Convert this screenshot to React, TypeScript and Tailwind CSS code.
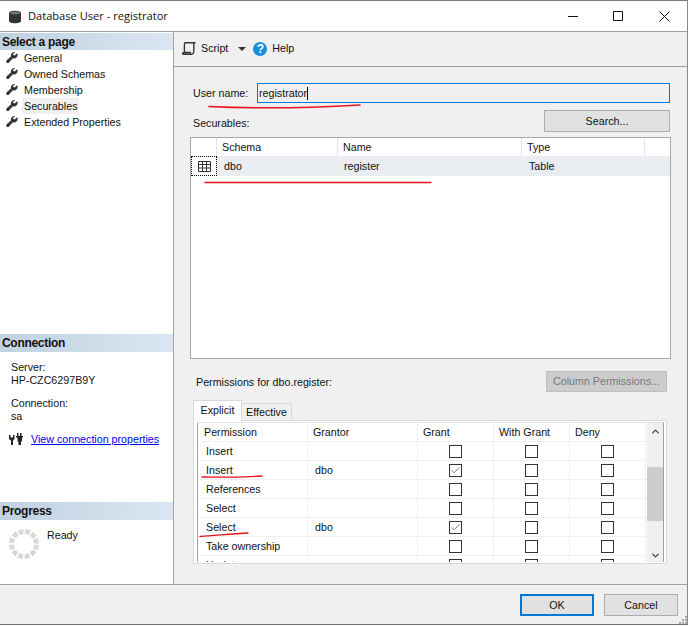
import { Check, ChevronDown, ChevronUp } from 'lucide-react';

const pages = ['General', 'Owned Schemas', 'Membership', 'Securables', 'Extended Properties'];

const permissions = [
    { name: 'Insert', grantor: '', grant: false },
    { name: 'Insert', grantor: 'dbo', grant: true },
    { name: 'References', grantor: '', grant: false },
    { name: 'Select', grantor: '', grant: false },
    { name: 'Select', grantor: 'dbo', grant: true },
    { name: 'Take ownership', grantor: '', grant: false },
    { name: 'Update', grantor: '', grant: false },
];

function WrenchIcon() {
    return (
        <svg width="12" height="12" viewBox="0 0 14 14" className="shrink-0">
            <path d="M13 1.500 10 4.200 8.600 3.600 8.200 2 11 0.200C8.800-0.300 6.400 0.800 5.900 3c-0.200 0.800-0.100 1.500 0.100 2.100L0.900 9.600C0 10.400 0 11.600 0.800 12.400 1.600 13.200 2.800 13.100 3.500 12.300L8 7.400c2.600 0.800 5.300-0.900 5.600-3.500 0.100-0.900-0.100-1.700-0.600-2.400Z" fill="#333" />
        </svg>
    );
}

function SectionHeader({ title, first }: { title: string; first?: boolean }) {
    return (
        <div className={`flex items-center bg-gradient-to-r from-[#c0d1e0] to-[#dbe6f3] pl-[2px] text-[12px] font-bold tracking-[-0.3px] text-[#111] ${first ? 'h-[17px]' : 'h-[18px]'}`}>
            {title}
        </div>
    );
}

function CheckBox({ checked }: { checked: boolean }) {
    return (
        <div className="flex h-[13px] w-[13px] items-center justify-center border border-[#333] bg-white">
            {checked && <Check className="h-[11px] w-[11px] text-[#555]" strokeWidth={1.7} />}
        </div>
    );
}

export default function App() {
    return (
        <div className="relative h-[627px] w-[689px] overflow-hidden bg-white font-['Liberation_Sans',sans-serif] text-[10.7px] text-[#111]">
            <div className="flex h-[625px] w-[688px] flex-col border-t border-r border-b border-t-[#7a7a7a] border-r-[#8a8a8a] border-b-[#6e6e6e]">
                {/* Title bar */}
                <div className="flex h-[31px] shrink-0 items-center border-b border-[#a0a0a0] bg-white">
                    <svg width="14" height="14" viewBox="0 0 14 14" className="ml-[8px] mt-px">
                        <path d="M1 3c0-3 12-3 12 0v8c0 3-12 3-12 0Z" fill="#333" />
                        <ellipse cx="7" cy="3" rx="5" ry="1.400" fill="#777" />
                    </svg>
                    <span className="ml-[6px] mt-px font-['Open_Sans',sans-serif] text-[11.1px] text-[#111]">Database User - registrator</span>
                    <div className="ml-auto flex items-center" >
                        <svg width="10" height="10" viewBox="0 0 10 10" stroke="#111" fill="none" className="mr-[35px]">
                            <path d="M0 5.500H10" />
                        </svg>
                        <svg width="10" height="10" viewBox="0 0 10 10" stroke="#111" fill="none" className="mr-[36px]">
                            <path d="M.5.500h9v9h-9Z" />
                        </svg>
                        <svg width="11" height="11" viewBox="0 0 11 11" stroke="#111" fill="none" className="mr-[17px]">
                            <path d="M.5.500l10 10M10.500.500l-10 10" />
                        </svg>
                    </div>
                </div>

                <div className="flex min-h-0 flex-1">
                    {/* Left pane */}
                    <div className="flex w-[174px] shrink-0 flex-col border-r border-[#a0a0a0] bg-white pt-px">
                        <SectionHeader title="Select a page" first />
                        <div className="flex h-[284px] flex-col">
                            {pages.map((page) => (
                                <div key={page} className="flex h-4 items-center pl-[6px]">
                                    <WrenchIcon />
                                    <span className={`ml-[4px] px-[2px] leading-4 ${page === 'Securables' ? 'bg-[#f0f0f0]' : ''}`}>{page}</span>
                                </div>
                            ))}
                        </div>
                        <SectionHeader title="Connection" />
                        <div className="flex h-[150px] flex-col pl-[11px] pt-[9px] leading-[13px]">
                            <div>Server:</div>
                            <div>HP-CZC6297B9Y</div>
                            <div className="mt-[10px]">Connection:</div>
                            <div>sa</div>
                            <div className="mt-[10px] -ml-[2px] flex items-center">
                                <svg width="15" height="13" viewBox="0 0 15 13" fill="#222">
                                    <path d="M0 2h1.500v2.500H4V2h1.500v4L4 7.500V12H2V7.500L0 6Z" />
                                    <path d="M8 0h1.500v3H11V0h1.500v3H14v1.500H13v4h-1V12H9.500V8.500h-1v-4H7V3h1Z" />
                                </svg>
                                <span className="ml-[7px] text-[#0000ee] underline">View connection properties</span>
                            </div>
                        </div>
                        <SectionHeader title="Progress" />
                        <div className="flex flex-1 pl-[9px] pt-[9px]">
                            <svg width="30" height="30" viewBox="0 0 30 30">
                                <circle cx="15" cy="15" r="12.500" fill="none" stroke="#d9d9d9" strokeWidth="5" strokeDasharray="4.940 1.600" strokeDashoffset="-0.800" />
                            </svg>
                            <span className="ml-[8px] mt-[-2px]">Ready</span>
                        </div>
                    </div>

                    {/* Right pane */}
                    <div className="flex min-w-0 flex-1 flex-col bg-[#f0f0f0]">
                        <div className="flex h-[35px] shrink-0 items-center border-b border-[#a0a0a0] pb-px pl-[8px]">
                            <svg width="14" height="13" viewBox="0 0 14 13" fill="none" stroke="#333" strokeWidth="1.400">
                                <path d="M3 .7h10.500M3 .7C2.400 1 2.400 2 2.400 3v7M13 .7c-1 0-1.200 1-1.200 2v7M.5 12.200h9.500c1 0 1.500-1 1.800-2.300M.5 12.200c0-1 .5-1.700 1.500-1.700h7" />
                            </svg>
                            <span className="ml-[5px]">Script</span>
                            <div className="ml-[10px] h-0 w-0 border-x-[4px] border-t-[4px] border-x-transparent border-t-[#333]" />
                            <div className="ml-[7px] flex h-[14px] w-[14px] items-center justify-center rounded-full bg-[#1a8ddc] text-[12px] font-bold text-white">?</div>
                            <span className="ml-[5px]">Help</span>
                        </div>

                        <div className="flex flex-1 flex-col px-4 pt-[16px]">
                            <div className="flex items-center pl-[3px]">
                                <span className="w-[64px]">User name:</span>
                                <div className="flex h-[20px] w-[413px] items-center border border-[#0078d7] bg-[#f0f0f0] pl-[1px]">
                                    registrator<span className="h-[13px] w-px bg-black" />
                                </div>
                            </div>

                            <div className="mt-[7px] flex h-[22px] items-center justify-between pl-[3px] pr-px">
                                <span className="mt-[4px]">Securables:</span>
                                <button className="h-[22px] w-[126px] border border-[#adadad] bg-[#e1e1e1]">Search...</button>
                            </div>

                            <div className="mt-[5px] h-[222px] w-[481px] border border-[#a9a9a9] bg-white">
                                <div className="flex h-[18px] items-center">
                                    <div className="h-full w-[26px] border-r border-[#e4e4e4]" />
                                    <div className="flex h-full w-[121px] items-center border-r border-[#e4e4e4] pl-[5px] pt-px">Schema</div>
                                    <div className="flex h-full w-[184px] items-center border-r border-[#e4e4e4] pl-[5px] pt-px">Name</div>
                                    <div className="flex h-full w-[123px] items-center border-r border-[#e4e4e4] pl-[5px] pt-px">Type</div>
                                </div>
                                <div className="flex h-[20px] items-center bg-[#e9edf1]">
                                    <div className="flex h-full w-[26px] items-center justify-center border border-dotted border-black bg-white">
                                        <svg width="13" height="11" viewBox="0 0 13 11" fill="none" stroke="#333" strokeWidth="1">
                                            <path d="M.5.500h12v10H.5ZM.5 3.500h12M.5 7h12M4.500 .5v10M8.500 .5v10" />
                                        </svg>
                                    </div>
                                    <div className="w-[121px] pl-[7px]">dbo</div>
                                    <div className="w-[184px] pl-[6px]">register</div>
                                    <div className="w-[123px] pl-[7px]">Table</div>
                                </div>
                            </div>

                            <div className="mt-[12px] flex h-[21px] items-center justify-between pl-[6px] pr-[4px]">
                                <span className="mt-[1px]">Permissions for dbo.register:</span>
                                <button className="h-[21px] w-[121px] border border-[#bfbfbf] bg-[#cccccc] text-[#787878]">Column Permissions...</button>
                            </div>

                            <div className="ml-[3px] mt-[8px] flex h-[21px] items-end">
                                <div className="relative z-10 flex h-[21px] w-[49px] items-center justify-center border border-b-0 border-[#d9d9d9] bg-white pb-[2px]">Explicit</div>
                                <div className="flex h-[18px] w-[50px] items-center justify-center border border-b-0 border-l-0 border-[#d9d9d9] bg-[#f0f0f0]">Effective</div>
                            </div>

                            <div className="-mt-px ml-[3px] h-[144px] w-[474px] border border-[#d9d9d9] bg-white pl-[3px] pt-[1px]">
                                <div className="flex h-[140px] w-[467px] overflow-hidden border-x border-t border-x-[#a0a0a0] border-t-[#e4e4e4]">
                                    <div className="min-w-0 flex-1">
                                        <div className="grid h-[19px] grid-cols-[110px_110px_76px_76px_76px] items-center border-b border-[#f0f0f0]">
                                            <div className="flex h-full items-center border-r border-[#f0f0f0] pl-[6px]">Permission</div>
                                            <div className="flex h-full items-center border-r border-[#f0f0f0] pl-[5px]">Grantor</div>
                                            <div className="flex h-full items-center border-r border-[#f0f0f0] pl-[5px]">Grant</div>
                                            <div className="flex h-full items-center border-r border-[#f0f0f0] pl-[5px]">With Grant</div>
                                            <div className="flex h-full items-center border-r border-[#f0f0f0] pl-[5px]">Deny</div>
                                        </div>
                                        {permissions.map((p, i) => (
                                            <div key={i} className="grid h-[19px] grid-cols-[110px_110px_76px_76px_76px] items-center border-b border-[#f0f0f0]">
                                                <div className="flex h-full items-center border-r border-[#f0f0f0] pl-[8px]">{p.name}</div>
                                                <div className="flex h-full items-center border-r border-[#f0f0f0] pl-[7px]">{p.grantor}</div>
                                                <div className="flex h-full items-center justify-center border-r border-[#f0f0f0]"><CheckBox checked={p.grant} /></div>
                                                <div className="flex h-full items-center justify-center border-r border-[#f0f0f0]"><CheckBox checked={false} /></div>
                                                <div className="flex h-full items-center justify-center border-r border-[#f0f0f0]"><CheckBox checked={false} /></div>
                                            </div>
                                        ))}
                                    </div>
                                    <div className="flex w-[16px] shrink-0 flex-col items-center bg-[#f0f0f0]">
                                        <ChevronUp className="mt-[3px] h-[11px] w-[11px] shrink-0 text-[#444]" strokeWidth={3} />
                                        <div className="mt-[30px] h-[54px] w-full shrink-0 bg-[#cdcdcd]" />
                                        <ChevronDown className="mt-[29px] h-[11px] w-[11px] shrink-0 text-[#444]" strokeWidth={3} />
                                    </div>
                                </div>
                            </div>
                        </div>
                    </div>
                </div>

                {/* Footer */}
                <div className="flex h-[40px] shrink-0 items-start justify-end border-t border-[#a0a0a0] bg-[#f0f0f0] pr-[9px] pt-[9px]">
                    <button className="h-[22px] w-[74px] border-2 border-[#0078d7] bg-[#e1e1e1]">OK</button>
                    <button className="ml-[10px] h-[22px] w-[74px] border border-[#adadad] bg-[#e1e1e1]">Cancel</button>
                </div>
            </div>

            {/* Resize grip in the corner */}
            <svg width="10" height="10" viewBox="0 0 10 10" className="absolute left-[678px] top-[615px]" fill="#a8a8a8">
                <rect x="7" y="1" width="2" height="2" />
                <rect x="4" y="4" width="2" height="2" />
                <rect x="7" y="4" width="2" height="2" />
                <rect x="1" y="7" width="2" height="2" />
                <rect x="4" y="7" width="2" height="2" />
                <rect x="7" y="7" width="2" height="2" />
            </svg>

            {/* Red pen marks drawn over the dialog */}
            <svg width="689" height="627" className="pointer-events-none absolute left-0 top-0" fill="none" stroke="#e8141c" strokeLinecap="round">
                <path d="M209 106.500C240 108 300 108.500 360 105" strokeWidth="1.500" />
                <path d="M205 182.500H431" strokeWidth="1.500" />
                <path d="M202 477C225 477.500 245 477 262 476" strokeWidth="1.300" />
                <path d="M200 536.500C215 535.500 232 534 248 533" strokeWidth="1.300" />
            </svg>
        </div>
    );
}
